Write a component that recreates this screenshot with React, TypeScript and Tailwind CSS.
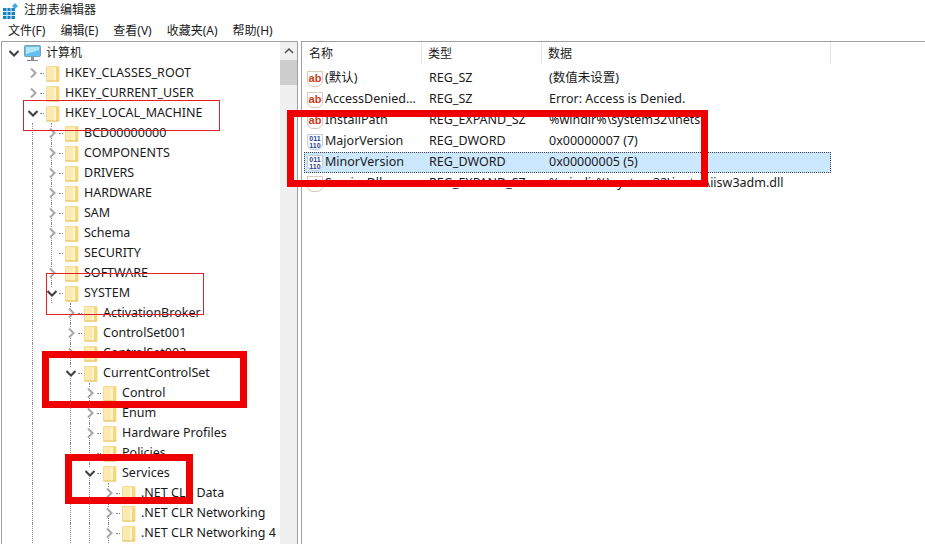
const FONT = "font-['Noto_Sans','Noto_Sans_CJK_SC',sans-serif]";

type Row = { level: number; label: string; kind: "open" | "closed" | "leaf"; guides: number[] };

const rows: Row[] = [
  { level: 1, label: "HKEY_CLASSES_ROOT", kind: "closed", guides: [] },
  { level: 1, label: "HKEY_CURRENT_USER", kind: "closed", guides: [] },
  { level: 1, label: "HKEY_LOCAL_MACHINE", kind: "open", guides: [] },
  { level: 2, label: "BCD00000000", kind: "closed", guides: [1] },
  { level: 2, label: "COMPONENTS", kind: "closed", guides: [1] },
  { level: 2, label: "DRIVERS", kind: "closed", guides: [1] },
  { level: 2, label: "HARDWARE", kind: "closed", guides: [1] },
  { level: 2, label: "SAM", kind: "closed", guides: [1] },
  { level: 2, label: "Schema", kind: "closed", guides: [1] },
  { level: 2, label: "SECURITY", kind: "leaf", guides: [1] },
  { level: 2, label: "SOFTWARE", kind: "closed", guides: [1] },
  { level: 2, label: "SYSTEM", kind: "open", guides: [1] },
  { level: 3, label: "ActivationBroker", kind: "closed", guides: [1] },
  { level: 3, label: "ControlSet001", kind: "closed", guides: [1] },
  { level: 3, label: "ControlSet002", kind: "closed", guides: [1] },
  { level: 3, label: "CurrentControlSet", kind: "open", guides: [1] },
  { level: 4, label: "Control", kind: "closed", guides: [1, 3] },
  { level: 4, label: "Enum", kind: "closed", guides: [1, 3] },
  { level: 4, label: "Hardware Profiles", kind: "closed", guides: [1, 3] },
  { level: 4, label: "Policies", kind: "leaf", guides: [1, 3] },
  { level: 4, label: "Services", kind: "open", guides: [1, 3] },
  { level: 5, label: ".NET CLR Data", kind: "closed", guides: [1, 3, 4] },
  { level: 5, label: ".NET CLR Networking", kind: "closed", guides: [1, 3, 4] },
  { level: 5, label: ".NET CLR Networking 4", kind: "closed", guides: [1, 3, 4] },
];

type Value = { name: string; type: string; data: string; icon: "ab" | "bin"; selected?: boolean };

const values: Value[] = [
  { name: "(默认)", type: "REG_SZ", data: "(数值未设置)", icon: "ab" },
  { name: "AccessDenied...", type: "REG_SZ", data: "Error: Access is Denied.", icon: "ab" },
  { name: "InstallPath", type: "REG_EXPAND_SZ", data: "%windir%\\system32\\inetsr", icon: "ab" },
  { name: "MajorVersion", type: "REG_DWORD", data: "0x00000007 (7)", icon: "bin" },
  { name: "MinorVersion", type: "REG_DWORD", data: "0x00000005 (5)", icon: "bin", selected: true },
  { name: "ServiceDll", type: "REG_EXPAND_SZ", data: "%windir%\\system32\\inetsr\\iisw3adm.dll", icon: "ab" },
];

function Chevron({ open }: { open: boolean }) {
  return (
    <svg width="10" height="10" viewBox="0 0 10 10" className="bg-white">
      {open ? (
        <path d="M.5 3l4.500 4.500L9.500 3" fill="none" stroke="#404040" strokeWidth="2" />
      ) : (
        <path d="M3 .5L7.500 5 3 9.500" fill="none" stroke="#a6a6a6" strokeWidth="2" />
      )}
    </svg>
  );
}

function Folder() {
  return (
    <svg width="14" height="17" viewBox="0 0 14 17" className="shrink-0">
      <path d="M.5 1.500h12.500v14.500H.5z" fill="#fdeab0" stroke="#f3dc98" />
      <path d="M10 2v14h3V2z" fill="#f8d777" />
      <path d="M10 2L8 3.500V16h2z" fill="#fff6d8" />
      <path d="M.5 16h12.500" stroke="#e6c15e" />
    </svg>
  );
}

function Computer() {
  return (
    <svg width="17" height="17" viewBox="0 0 17 17" className="shrink-0">
      <rect x="0.5" y="0.5" width="16" height="11" rx="1" fill="#63c0f2" stroke="#7d9db3" />
      <path d="M2 2h13v3L2 9z" fill="#b5e6fb" />
      <rect x="7" y="12" width="3" height="3" fill="#8a97a1" />
      <rect x="3" y="15" width="11" height="1" fill="#7d8a94" />
    </svg>
  );
}

function AbIcon() {
  return (
    <span className="w-4 h-4 shrink-0 border border-[#d8c9b8] bg-white rounded-b-md flex items-center justify-center text-[11px] leading-none font-bold text-[#cf3b22] font-['Liberation_Sans',sans-serif]">
      ab
    </span>
  );
}

function BinIcon() {
  return (
    <span className="w-4 h-4 shrink-0 border border-[#c3cbd8] bg-white rounded-b-md flex flex-col items-center justify-center text-[7px] leading-[7px] font-bold text-[#1f3f8f] font-['Liberation_Sans',sans-serif]">
      <span>011</span>
      <span>110</span>
    </span>
  );
}

function GuideCell({ show, children }: { show: boolean; children?: React.ReactNode }) {
  return (
    <div className="relative w-[19px] h-5 shrink-0 flex items-center justify-center">
      {show && <div className="absolute left-[9px] top-0 bottom-0 border-l border-dotted border-[#8a8a8a]" />}
      {children && <div className="relative flex">{children}</div>}
    </div>
  );
}

function TreeRow({ row }: { row: Row }) {
  const cells = [];
  for (let i = 0; i < row.level; i++) {
    cells.push(<GuideCell key={i} show={row.guides.includes(i)} />);
  }
  return (
    <div className="flex items-center h-5 text-[12.5px] text-[#1a1a1a] whitespace-nowrap">
      {cells}
      <GuideCell show={row.level > 1}>
        {row.kind !== "leaf" && <Chevron open={row.kind === "open"} />}
      </GuideCell>
      <div className="w-[4px] -ml-[2px] mr-[2px] border-t border-dotted border-[#8a8a8a]" />
      <Folder />
      <span className="ml-[5px]">{row.label}</span>
    </div>
  );
}

export default function App() {
  return (
    <div className={`w-[925px] h-[544px] overflow-hidden bg-white relative flex flex-col ${FONT}`}>
      <div className="h-5 flex items-center pl-[2px] gap-[5px] text-[12px] text-[#1a1a1a]">
        <svg width="17" height="18" viewBox="0 0 17 18" className="shrink-0 mt-[1px]">
          <rect x="1" y="6" width="12" height="11" fill="#1b82bd" />
          <path d="M5 6v11M9 6v11M1 9.500h12M1 13.500h12" stroke="#d5edf8" />
          <path d="M13 1l3 3-3 3-3-3z" fill="#45a9de" />
        </svg>
        <span>注册表编辑器</span>
      </div>
      <div className="h-[21px] flex items-center text-[12px] text-[#1a1a1a] pl-2 gap-[15px]">
        <span>文件(F)</span>
        <span>编辑(E)</span>
        <span>查看(V)</span>
        <span>收藏夹(A)</span>
        <span>帮助(H)</span>
      </div>
      <div className="flex-1 flex min-h-0">
        <div className="w-[297px] ml-[1px] shrink-0 border-t border-x border-[#a0a0a0] flex">
          <div className="flex-1 min-w-0 overflow-hidden pl-[2px] pt-px">
            <div className="flex items-center h-5 text-[12.5px] text-[#1a1a1a]">
              <GuideCell show={false}>
                <Chevron open />
              </GuideCell>
              <div className="w-[1px]" />
              <Computer />
              <span className="ml-[5px] text-[12px]">计算机</span>
            </div>
            {rows.map((row) => (
              <TreeRow key={row.label} row={row} />
            ))}
          </div>
          <div className="w-[17px] shrink-0 bg-[#f0f0f0] flex flex-col items-center">
            <svg width="10" height="18" viewBox="0 0 10 18" className="shrink-0">
              <path d="M1 11l4-4 4 4" fill="none" stroke="#505050" strokeWidth="1.5" />
            </svg>
            <div className="w-full h-[25px] bg-[#cdcdcd]" />
          </div>
        </div>
        <div className="flex-1 ml-[3px] border-t border-l border-[#a0a0a0] text-[12.5px] text-[#1a1a1a] min-w-0">
          <div className="flex h-[22px] items-center w-[529px] text-[12px]">
            <div className="w-[120px] h-full pl-[7px] pt-[2px] flex items-center border-r border-[#e5e5e5]">名称</div>
            <div className="w-[120px] h-full pl-[6px] pt-[2px] flex items-center border-r border-[#e5e5e5]">类型</div>
            <div className="flex-1 h-full pl-[6px] pt-[2px] flex items-center border-r border-[#e5e5e5]">数据</div>
          </div>
          <div className="pl-[2px] pt-[4px]">
            {values.map((v) => (
              <div
                key={v.name}
                className={`flex items-center h-[21px] w-[527px] whitespace-nowrap border border-dotted ${
                  v.selected ? "bg-[#cce8ff] border-[#404040]" : "border-transparent"
                }`}
              >
                <div className="w-[118px] pl-[2px] flex items-center gap-[2px]">
                  {v.icon === "ab" ? <AbIcon /> : <BinIcon />}
                  <span>{v.name}</span>
                </div>
                <div className="w-[120px] pl-[6px]">{v.type}</div>
                <div className="pl-[6px]">{v.data}</div>
              </div>
            ))}
          </div>
        </div>
      </div>

      {/* annotation boxes drawn over the screenshot */}
      <div className="absolute left-[23px] top-[100px] w-[197px] h-[31px] border border-[#e0202a]" />
      <div className="absolute left-[46px] top-[273px] w-[158px] h-[42px] border border-[#e0202a]" />
      <div className="absolute left-[42px] top-[351px] w-[205px] h-[57px] border-[7px] border-[#ee0000]" />
      <div className="absolute left-[65px] top-[454px] w-[128px] h-[50px] border-[7px] border-[#ee0000]" />
      <div className="absolute left-[287px] top-[110px] w-[421px] h-[77px] border-[7px] border-[#ee0000]" />
    </div>
  );
}
